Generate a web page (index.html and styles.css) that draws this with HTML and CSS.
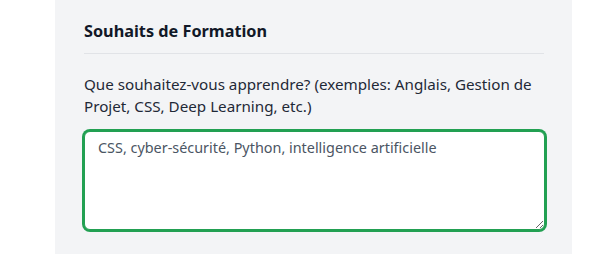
FILE: index.html
```html
<!DOCTYPE html>
<html lang="fr">
<head>
<meta charset="utf-8">
<link rel="stylesheet" href="styles.css">
</head>
<body>
<section class="panel">
  <h2 class="title">Souhaits de Formation</h2>
  <label class="label" for="wish">Que souhaitez-vous apprendre? (exemples: Anglais, Gestion de Projet, CSS, Deep Learning, etc.)</label>
  <textarea id="wish" class="field">CSS, cyber-sécurité, Python, intelligence artificielle</textarea>
</section>
</body>
</html>
```
FILE: styles.css
```css
html, body {
  margin: 0;
  padding: 0;
  background: #ffffff;
}
body {
  font-family: "Noto Sans", "Open Sans", sans-serif;
  color: #1f2937;
}
.panel {
  margin-left: 55px;
  width: 517px;
  height: 254px;
  box-sizing: border-box;
  background: #f3f4f6;
  padding: 20px 28px 0 29px;
  display: flex;
  flex-direction: column;
}
.title {
  margin: 0;
  font-size: 16.25px;
  font-weight: 700;
  line-height: 22px;
  color: #111827;
  padding-bottom: 11px;
  border-bottom: 1px solid #e1e3e7;
}
.label {
  display: block;
  margin-top: 19px;
  font-size: 15.2px;
  line-height: 22px;
  color: #1f2937;
}
.field {
  margin-top: 14px;
  width: calc(100% + 1px);
  height: 99px;
  box-sizing: border-box;
  font-family: "Noto Sans", "Open Sans", sans-serif;
  font-size: 14.4px;
  line-height: 20px;
  color: #4b5563;
  background: #ffffff;
  border: 1px solid #22a052;
  box-shadow: 0 0 0 2px #22a052;
  border-radius: 6px;
  padding: 6px 13px;
  outline: none;
  resize: vertical;
}
```
